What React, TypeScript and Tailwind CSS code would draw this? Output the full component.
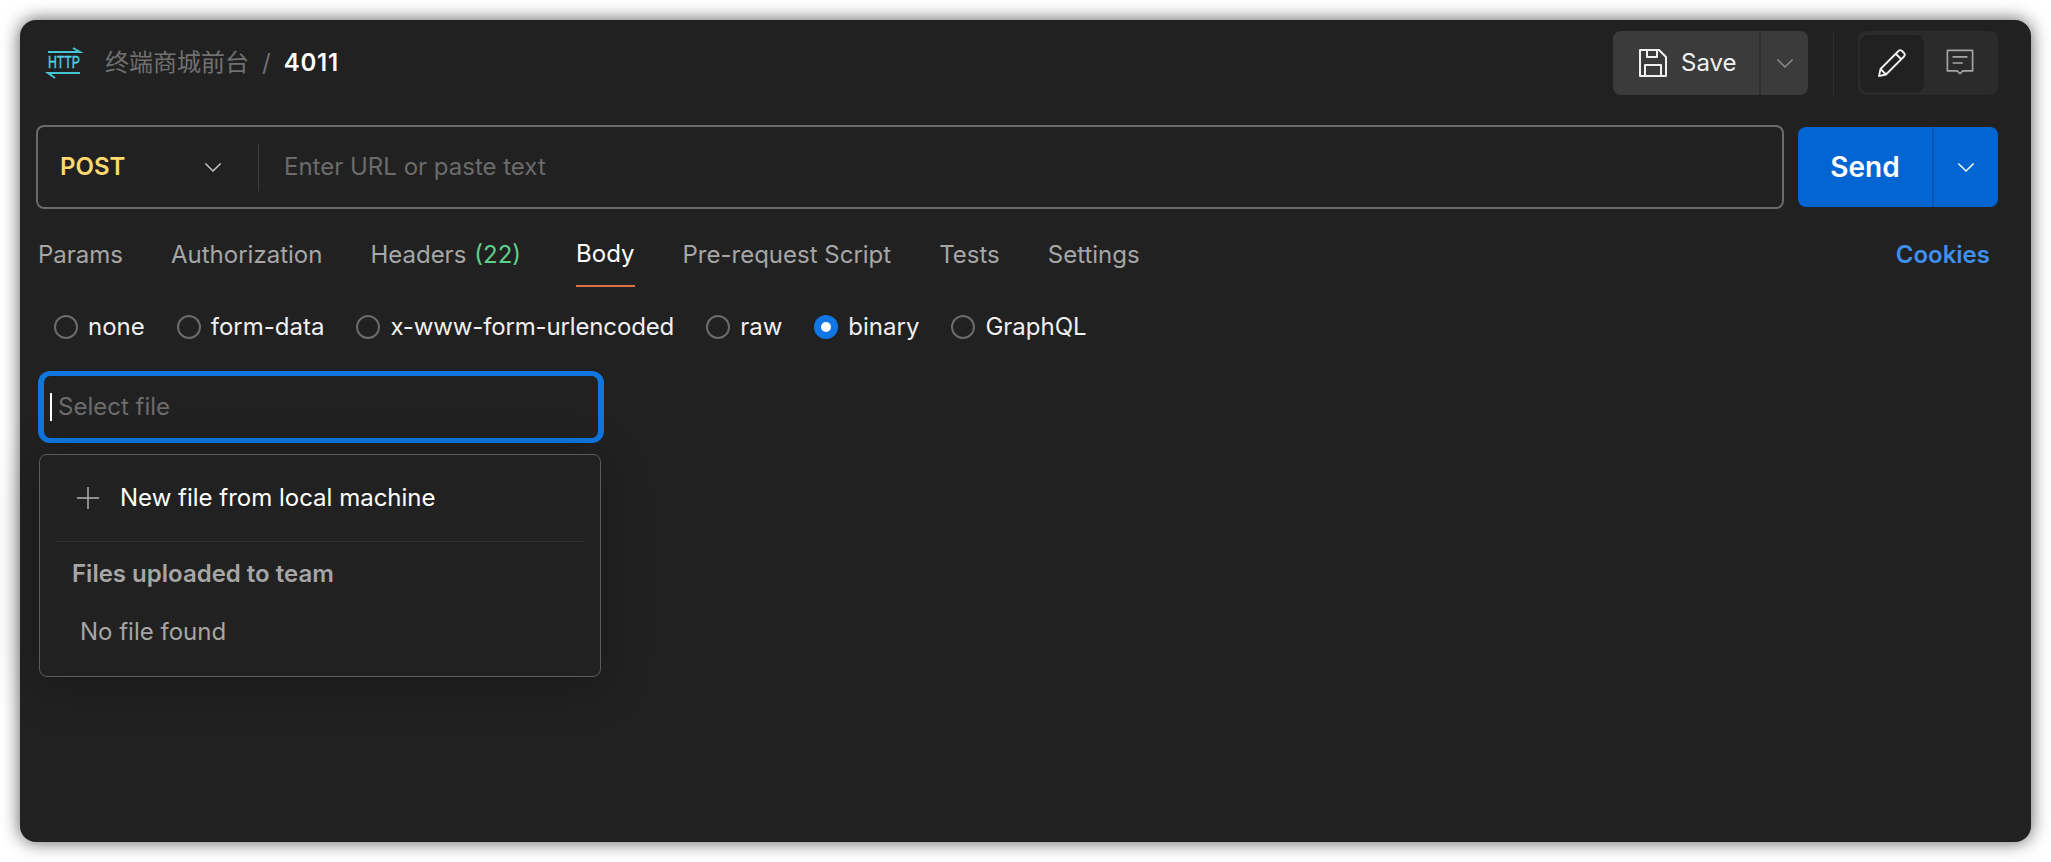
import React from "react";

const Chevron = ({ className = "" }: { className?: string }) => (
  <svg viewBox="0 0 20 12" className={`w-[18px] h-[11px] ${className}`} fill="none" stroke="currentColor" strokeWidth="1.6">
    <path d="M1.5 1.5 10 10l8.5-8.5" />
  </svg>
);

const HttpIcon = () => (
  <svg viewBox="0 0 34 32" className="w-[34px] h-[32px] overflow-visible" fill="none" stroke="#45c4d4" strokeWidth="2">
    <path d="M1 5h32L26 1" />
    <path d="M33 26H1l7 5" />
    <text x="1" y="21" fill="#4fd0e0" stroke="#4fd0e0" strokeWidth="0.4" fontSize="16" textLength="32" lengthAdjust="spacingAndGlyphs" fontFamily="'Liberation Sans', sans-serif">HTTP</text>
  </svg>
);

const SaveIcon = () => (
  <svg viewBox="0 0 28 28" className="w-[28px] h-[28px]" fill="none" stroke="#f0f0f0" strokeWidth="2" strokeLinejoin="round">
    <path d="M1 1h19l7 7v19H1z" />
    <path d="M8 1v7h10V1" />
    <path d="M6 27V16h16v11" />
  </svg>
);

const PencilIcon = () => (
  <svg viewBox="0 0 30 30" className="w-[30px] h-[30px]" fill="none" stroke="#f0f0f0" strokeWidth="1.8" strokeLinejoin="round">
    <path d="M2 28l1.5-7L21.5 3a2.5 2.5 0 0 1 3.5 0l2 2a2.5 2.5 0 0 1 0 3.5L9 26.5z" />
    <path d="M19 6l5.5 5.5" />
    <path d="M3.5 21 9 26.5" />
  </svg>
);

const CommentIcon = () => (
  <svg viewBox="0 0 30 30" className="w-[28px] h-[28px]" fill="none" stroke="#a6a6a6" strokeWidth="1.8" strokeLinejoin="round">
    <path d="M1.5 1.5h27v22H18l-3 3-3-3H1.5z" />
    <path d="M7 8.5h16M7 15h11" />
  </svg>
);

const Radio = ({ label, checked = false, tight = false }: { label: string; checked?: boolean; tight?: boolean }) => (
  <div className="flex items-center gap-[10px]">
    {checked ? (
      <span className="w-[24px] h-[24px] rounded-full bg-[#1076e6] flex items-center justify-center">
        <span className="w-[10px] h-[10px] rounded-full bg-white" />
      </span>
    ) : (
      <span className="w-[24px] h-[24px] rounded-full border-2 border-[#6b6b6b]" />
    )}
    <span className={tight ? "text-[#f0f0f0] tracking-[-0.14px]" : "text-[#f0f0f0]"}>{label}</span>
  </div>
);

export default function App() {
  return (
    <div className="h-[862px] bg-white p-5 font-['Inter','Noto_Sans_CJK_SC',sans-serif] text-[24px] overflow-hidden">
      <div className="h-full rounded-[16px] bg-[#212121] shadow-[0_0_18px_rgba(0,0,0,0.65)] pt-[11px] pl-[16px] pr-[33px]">
        {/* Header */}
        <div className="flex items-center h-[64px]">
          <div className="ml-[11px] mr-[24px] flex items-center"><HttpIcon /></div>
          <span className="text-[#707070]">终端商城前台</span>
          <span className="text-[#707070] ml-[13px] mr-[13px]">/</span>
          <span className="text-white font-semibold tracking-[0.8px]">4011</span>
          <div className="ml-auto flex items-stretch h-full">
            <div className="flex h-full rounded-[8px] bg-[#3b3b3b] overflow-hidden">
              <div className="w-[146px] flex items-center pl-[26px] gap-[14px] text-[#f0f0f0]">
                <SaveIcon />
                <span>Save</span>
              </div>
              <div className="w-[49px] border-l-2 border-[#2e2e2e] flex items-center justify-center text-[#8c8c8c]"><Chevron /></div>
            </div>
            <div className="w-px bg-[#2e2e2e] ml-[25px] mr-[24px]" />
            <div className="w-[140px] h-full rounded-[8px] bg-[#2b2b2b] flex items-center pl-[2px]">
              <div className="w-[64px] h-[57px] rounded-[8px] bg-[#212121] flex items-center justify-center"><PencilIcon /></div>
              <div className="flex-1 flex items-center justify-center pr-[2px]"><CommentIcon /></div>
            </div>
          </div>
        </div>

        {/* URL row */}
        <div className="flex items-center mt-[30px] h-[84px]">
          <div className="flex-1 h-[84px] rounded-[8px] border-2 border-[#6b6b6b] flex items-center">
            <div className="w-[221px] pl-[22px] pr-[36px] flex items-center justify-between border-r border-[#3b3b3b] h-[47px]">
              <span className="text-[#ffd970] font-semibold">POST</span>
              <Chevron className="text-[#c8c8c8]" />
            </div>
            <span className="ml-[25px] text-[#6b6b6b]">Enter URL or paste text</span>
          </div>
          <div className="ml-[14px] w-[200px] h-[80px] rounded-[8px] bg-[#0265d2] flex text-white">
            <div className="w-[136px] border-r-2 border-[#0256b4] flex items-center justify-center text-[28px] font-semibold">Send</div>
            <div className="flex-1 flex items-center justify-center"><Chevron /></div>
          </div>
        </div>

        {/* Tabs */}
        <div className="flex items-stretch gap-[48px] h-[78px] pt-[14px] pl-[2px] pr-[8px] text-[#a6a6a6]">
          <div className="flex items-center">Params</div>
          <div className="flex items-center">Authorization</div>
          <div className="flex items-center gap-[8px] mr-[7px]">Headers <span className="text-[#5fcf8a]">(22)</span></div>
          <div className="flex items-center text-white border-b-2 border-[#d9724a]">Body</div>
          <div className="flex items-center">Pre-request Script</div>
          <div className="flex items-center">Tests</div>
          <div className="flex items-center">Settings</div>
          <div className="ml-auto flex items-center text-[#3f8fef] font-semibold">Cookies</div>
        </div>

        {/* Radios */}
        <div className="flex items-center gap-[32px] h-[40px] mt-[20px] pl-[18px]">
          <Radio label="none" />
          <Radio label="form-data" />
          <Radio label="x-www-form-urlencoded" tight />
          <Radio label="raw" />
          <Radio label="binary" checked />
          <Radio label="GraphQL" />
        </div>

        {/* File select */}
        <div className="w-[566px] h-[72px] ml-[2px] mt-[24px] rounded-[12px] border-x-[6px] border-y-[5px] border-[#0f76de] flex items-center pl-[6px]">
          <span className="w-[2px] h-[28px] bg-white mr-[6px]" />
          <span className="text-[#6b6b6b]">Select file</span>
        </div>
        <div className="w-[562px] h-[223px] ml-[3px] mt-[11px] rounded-[8px] border border-[#5c5c5c] bg-[#212121] shadow-[0_8px_48px_rgba(0,0,0,0.25)] px-[16px] flex flex-col">
          <div className="flex items-center gap-[20px] h-[86px] pl-[20px] text-white">
            <svg viewBox="0 0 26 26" className="w-[24px] h-[24px]" fill="none" stroke="#b0b0b0" strokeWidth="1.6"><path d="M13 1v24M1 13h24" /></svg>
            New file from local machine
          </div>
          <div className="h-px bg-[#303030]" />
          <div className="mt-[14px] pl-[16px] text-[#a6a6a6] font-semibold">Files uploaded to team</div>
          <div className="mt-[22px] pl-[24px] text-[#a6a6a6]">No file found</div>
        </div>
      </div>
    </div>
  );
}
